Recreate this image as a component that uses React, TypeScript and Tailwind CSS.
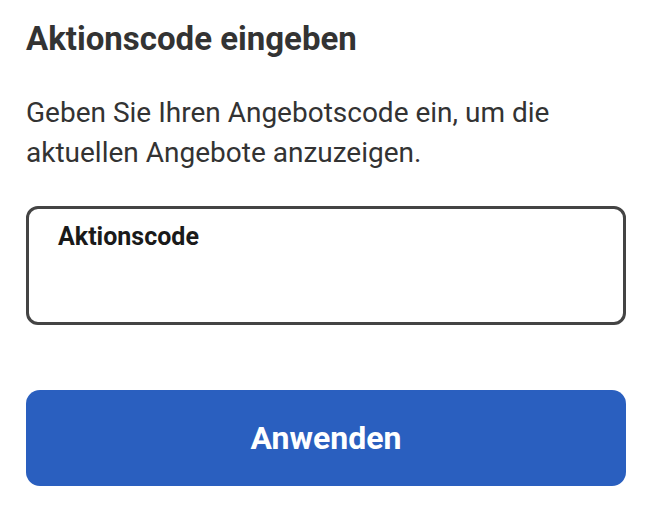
export default function App() {
  return (
    <div className="min-h-[512px] bg-white pl-[26px] pr-[24px] pt-[19px] font-['Roboto',sans-serif]">
      <h1 className="text-[33px] font-bold leading-[40px] text-[#333333]">Aktionscode eingeben</h1>

      <p className="mt-[34px] text-[28px] leading-[40px] text-[#333333]">
        Geben Sie Ihren Angebotscode ein, um die aktuellen Angebote anzuzeigen.
      </p>

      <label className="mt-[33px] flex h-[119px] w-full flex-col rounded-[12px] border-[3px] border-[#444444] px-[29px] pt-[13px]">
        <span className="text-[25px] font-bold leading-[30px] text-[#1a1a1a]">Aktionscode</span>
        <input type="text" className="mt-2 w-full bg-transparent text-[24px] text-[#1a1a1a] outline-none" />
      </label>

      <button
        type="button"
        className="mt-[65px] flex h-[96px] w-full items-center justify-center rounded-[14px] bg-[#2a5fbf] text-[32px] font-bold text-white"
      >
        Anwenden
      </button>
    </div>
  )
}
